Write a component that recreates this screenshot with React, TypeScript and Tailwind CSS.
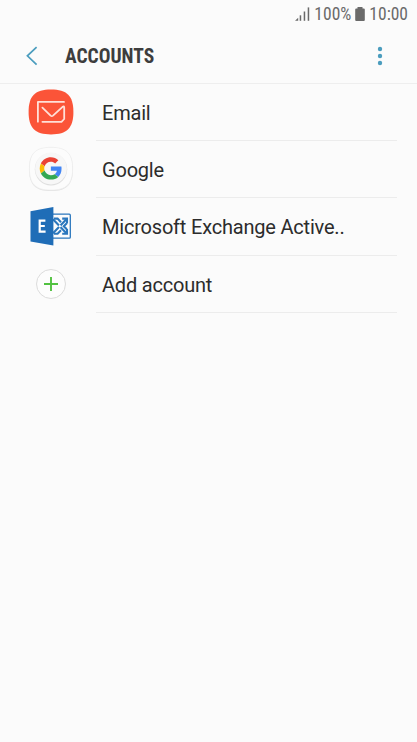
import type { ReactNode } from "react"

function SignalIcon() {
  return (
    <svg width="15" height="14" viewBox="0 0 15 14" fill="#6a6a6a">
      <path d="M0 13.8L3.2 10.8v3z" />
      <rect x="4.7" y="8.3" width="1.5" height="5.5" />
      <rect x="8.7" y="4.5" width="1.5" height="9.3" />
      <rect x="12.7" y="0.4" width="1.5" height="13.4" />
    </svg>
  )
}

function BatteryIcon() {
  return (
    <svg width="10" height="14" viewBox="0 0 10 14" fill="#6a6a6a">
      <path d="M2.5 0h5v1.6h1.3a1 1 0 0 1 1 1V13a1 1 0 0 1-1 1H1.2a1 1 0 0 1-1-1V2.6a1 1 0 0 1 1-1H2.5z" />
    </svg>
  )
}

function EmailIcon() {
  return (
    <svg width="46" height="46" viewBox="0 0 46 46" fill="none">
      <path
        d="M23 0.6C39 0.6 45.4 7 45.4 23S39 45.4 23 45.4 0.6 39 0.6 23 7 0.6 23 0.6z"
        fill="#fb5438"
      />
      <g stroke="#ffe0d8" strokeWidth="1.8" strokeLinecap="round" strokeLinejoin="round">
        <path d="M36 12.9H9.9v19.8" />
        <path d="M14.4 32.8H33.5L36.2 30V18.4q0-1.8-1.6-0.6L25 26.6q-1.2 1-2.4 0L14.4 18.6" />
      </g>
    </svg>
  )
}

function GoogleIcon() {
  return (
    <svg width="46" height="46" viewBox="0 0 46 46" fill="none">
      <path
        d="M23 1.6C38.5 1.6 44.9 8 44.9 23.4S38.5 45 23 45 1.1 38.8 1.1 23.4 7.5 1.6 23 1.6z"
        fill="#e2e2e2"
      />
      <path
        d="M23 1.3C38.5 1.3 44.6 7.5 44.6 22.7S38.5 44.1 23 44.1 1.4 37.9 1.4 22.7 7.5 1.3 23 1.3z"
        fill="#fcfcfc"
        stroke="#ececec"
        strokeWidth="0.7"
      />
      <circle cx="23" cy="23.2" r="16.2" fill="#dedede" />
      <circle cx="23" cy="22.5" r="15.9" fill="#f7f7f7" />
      <g transform="translate(11.7 11.3) scale(0.465)">
        <path
          fill="#ea4335"
          d="M24 9.5c3.54 0 6.71 1.22 9.21 3.6l6.85-6.85C35.9 2.38 30.47 0 24 0 14.62 0 6.51 5.38 2.56 13.22l7.98 6.19C12.43 13.72 17.74 9.5 24 9.5z"
        />
        <path
          fill="#4285f4"
          d="M46.98 24.55c0-1.57-.15-3.09-.38-4.55H24v9.02h12.94c-.58 2.96-2.26 5.48-4.78 7.18l7.73 6c4.51-4.18 7.09-10.36 7.09-17.65z"
        />
        <path
          fill="#fbbc05"
          d="M10.53 28.59c-.48-1.45-.76-2.99-.76-4.59s.27-3.14.76-4.59l-7.98-6.19C.92 16.46 0 20.12 0 24c0 3.88.92 7.54 2.56 10.78l7.97-6.19z"
        />
        <path
          fill="#34a853"
          d="M24 48c6.48 0 11.93-2.13 15.89-5.81l-7.73-6c-2.15 1.45-4.92 2.3-8.16 2.3-6.26 0-11.57-4.22-13.47-9.91l-7.98 6.19C6.51 42.62 14.62 48 24 48z"
        />
      </g>
    </svg>
  )
}

function ExchangeIcon() {
  return (
    <svg width="46" height="46" viewBox="0 0 46 46" fill="none">
      <rect x="22" y="11.2" width="20.3" height="24" rx="1" fill="#fcfcfc" stroke="#2b77bd" strokeWidth="1.3" />
      <g stroke="#2b77bd" strokeWidth="2.1">
        <path d="M25 16.2l13.4 14M38.4 16.2L25 30.2" />
        <path d="M34.2 15.6h4.8v4.8M34.2 30.8h4.8v-4.8" />
        <path d="M26 15.6h3.6l3.4 3.6M26 30.8h3.6l3.4-3.6M38.8 20.2l-3 3 3 3" />
      </g>
      <path d="M31.8 21.6l1.6 1.6-1.6 1.6-1.6-1.6z" fill="#fcfcfc" />
      <path d="M2.5 8.2L25.4 4v38.6L2.5 38.4z" fill="#1f6db7" />
      <path d="M17.4 17.6H11.7v11h5.9M11.7 23h5.1" stroke="#fff" strokeWidth="2.2" />
    </svg>
  )
}

function AddIcon() {
  return (
    <svg width="46" height="46" viewBox="0 0 46 46" fill="none">
      <circle cx="23" cy="23" r="14.5" fill="#fdfdfd" stroke="#dcdcdc" strokeWidth="1" />
      <path d="M23 16v14M16 23h14" stroke="#52c241" strokeWidth="1.9" />
    </svg>
  )
}

const accounts: { label: string; icon: ReactNode; height: string }[] = [
  { label: "Email", icon: <EmailIcon />, height: "h-[57px]" },
  { label: "Google", icon: <GoogleIcon />, height: "h-[57px]" },
  { label: "Microsoft Exchange Active..", icon: <ExchangeIcon />, height: "h-[58px]" },
  { label: "Add account", icon: <AddIcon />, height: "h-[57px]" },
]

export default function App() {
  return (
    <div className="min-h-screen w-full bg-[#fbfbfb] font-['Roboto',sans-serif] text-[#2c2c2c]">
      <div className="flex h-7 items-center justify-end pr-[9px] text-[17.5px] leading-7 text-[#6a6a6a] [font-stretch:75%]">
        <SignalIcon />
        <span className="ml-1">100%</span>
        <span className="ml-1">
          <BatteryIcon />
        </span>
        <span className="ml-1">10:00</span>
      </div>

      <header className="flex h-14 items-center border-b border-[#eeeeee] pr-[34px] pl-[26px]">
        <svg width="12" height="20" viewBox="0 0 12 20" fill="none" stroke="#4b9dbe" strokeWidth="1.7">
          <path d="M10.6 1.2L1.4 9.8l9.2 8.8" />
        </svg>
        <h1 className="ml-[27px] pt-0.5 text-[19.5px] font-bold text-[#3d3d3d] [font-stretch:75%]">ACCOUNTS</h1>
        <svg className="ml-auto" width="6" height="20" viewBox="0 0 6 20" fill="#4b9dbe">
          <circle cx="3" cy="3" r="2.2" />
          <circle cx="3" cy="10" r="2.2" />
          <circle cx="3" cy="17" r="2.2" />
        </svg>
      </header>

      <ul>
        {accounts.map((account) => (
          <li key={account.label} className={`flex pr-5 pl-7 ${account.height}`}>
            <div className="flex w-[68px] items-center pb-0.5">{account.icon}</div>
            <div className="flex-1 border-b border-[#ececec] pt-[15px] pl-1.5 text-xl tracking-[-0.2px] whitespace-nowrap">
              {account.label}
            </div>
          </li>
        ))}
      </ul>
    </div>
  )
}
